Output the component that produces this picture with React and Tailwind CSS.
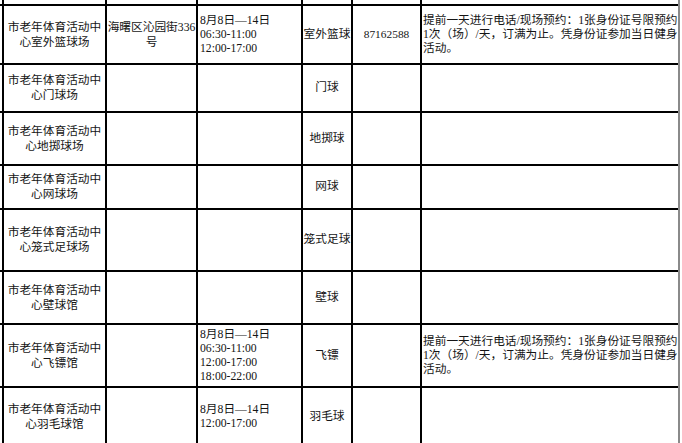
import React from "react";

const NOTE = [
  "提前一天进行电话/现场预约：1张身份证号限预约",
  "1次（场）/天，订满为止。凭身份证参加当日健身",
  "活动。",
];

const rows = [
  {
    name: "心室外篮球场",
    addr: ["海曙区沁园街336", "号"],
    time: ["8月8日—14日", "06:30-11:00", "12:00-17:00"],
    sport: "室外篮球",
    phone: "87162588",
    note: NOTE,
  },
  { name: "心门球场", sport: "门球" },
  { name: "心地掷球场", sport: "地掷球" },
  { name: "心网球场", sport: "网球" },
  { name: "心笼式足球场", sport: "笼式足球" },
  { name: "心壁球馆", sport: "壁球" },
  {
    name: "心飞镖馆",
    time: ["8月8日—14日", "06:30-11:00", "12:00-17:00", "18:00-22:00"],
    sport: "飞镖",
    note: NOTE,
  },
  {
    name: "心羽毛球馆",
    time: ["8月8日—14日", "12:00-17:00"],
    sport: "羽毛球",
  },
];

const Lines = ({ lines }) =>
  lines.map((l, i) => (
    <div key={i} className="whitespace-nowrap">
      {l}
    </div>
  ));

const App = () => {
  return (
    <div
      className="w-[682px] h-[443px] overflow-hidden bg-white text-[#151515] text-[11.7px]"
      style={{ fontFamily: '"Liberation Serif", "Noto Sans CJK SC", sans-serif' }}
    >
      <div className="w-[680px] border-r-2 border-[#8a8a8a]">
        <div className="grid grid-cols-[2px_101px_89px_103px_48px_67px_256px] grid-rows-[4px_57px_46px_51px_42px_60px_51px_61px_57px] gap-[2px] bg-black">
          {/* cut-off row at the top */}
          <div className="bg-white" />
          <div className="bg-white" />
          <div className="bg-white" />
          <div className="bg-white" />
          <div className="bg-white" />
          <div className="bg-white" />
          <div className="bg-white" />

          {rows.map((r, i) => (
            <React.Fragment key={i}>
              <div className="bg-white" />
              <div className="bg-white flex flex-col items-center justify-center text-center leading-[15px]">
                <div className="whitespace-nowrap">市老年体育活动中</div>
                <div className="whitespace-nowrap">{r.name}</div>
              </div>
              <div className="bg-white flex flex-col items-center justify-center text-center leading-[15px]">
                {r.addr && <Lines lines={r.addr} />}
              </div>
              <div className="bg-white flex flex-col justify-center pl-[2px] leading-[14px]">
                {r.time && <Lines lines={r.time} />}
              </div>
              <div className="bg-white flex items-center justify-center whitespace-nowrap">
                {r.sport}
              </div>
              <div className="bg-white flex items-center justify-center text-[11.4px]">
                {r.phone}
              </div>
              <div className="bg-white flex flex-col justify-center pl-[1px] leading-[14px]">
                {r.note && <Lines lines={r.note} />}
              </div>
            </React.Fragment>
          ))}
        </div>
      </div>
    </div>
  );
};

export default App;
